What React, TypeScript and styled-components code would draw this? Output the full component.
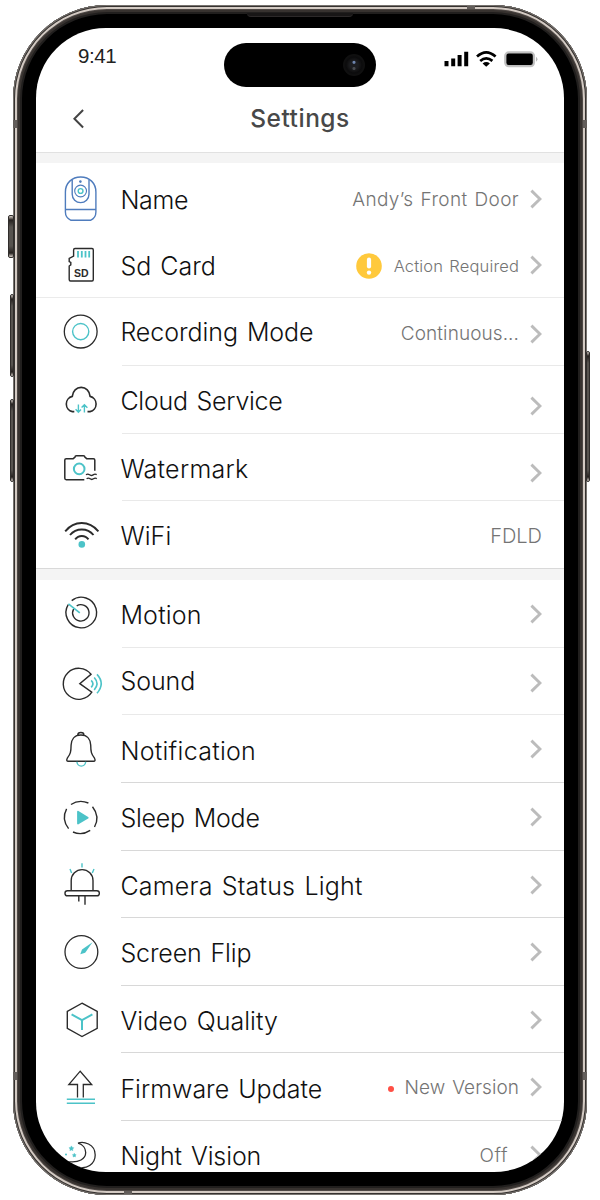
import React from 'react';
import styled, { createGlobalStyle } from 'styled-components';

const INK = '#2b2b2b';
const TEAL = '#4cc3c8';
const BLUE = '#4f7cbd';

const GlobalStyle = createGlobalStyle`
  * { box-sizing: border-box; }
  body { margin: 0; background: #fff; font-family: Inter, "Liberation Sans", sans-serif; }
`;

const Stage = styled.main`
  width: 600px;
  height: 1200px;
  padding: 5px 13px;
  overflow: hidden;
  background: #fff;
`;

const Phone = styled.div`
  position: relative;
  width: 574px;
  height: 1190px;
  padding: 23px;
  border-radius: 94px;
  background: #000;
  box-shadow:
    inset 0 0 0 1px #77736f,
    inset 0 0 0 2px #35312f,
    inset 0 0 0 4px #d3cac3,
    inset 0 0 0 5px #4d4744,
    inset 0 0 0 7px #37322f,
    inset 0 0 0 9px #211f1e;
`;

const SideButton = styled.span<{ $side: 'left' | 'right'; $top: number; $height: number; $depth: number }>`
  position: absolute;
  ${p => p.$side}: ${p => -p.$depth}px;
  top: ${p => p.$top}px;
  width: ${p => p.$depth + 1}px;
  height: ${p => p.$height}px;
  border: 1px solid #302d2b;
  border-radius: 2px;
  background: linear-gradient(to bottom, #d8d0c9 0, #26211f 4px, #57534f 11px, #57534f calc(100% - 11px), #26211f calc(100% - 4px), #d8d0c9 100%);
`;

const Band = styled.span<{ $x: number; $y: number; $flat?: boolean }>`
  position: absolute;
  left: ${p => p.$x}px;
  top: ${p => p.$y}px;
  width: ${p => (p.$flat ? 8 : 4)}px;
  height: ${p => (p.$flat ? 3 : 8)}px;
  background: #625d5a;
`;

const Earpiece = styled.span`
  position: absolute;
  left: 234px;
  top: 8px;
  width: 106px;
  height: 4px;
  border-radius: 0 0 4px 4px;
  background: #181616;
  border-bottom: 1px solid #2c2929;
`;

const Screen = styled.div`
  position: relative;
  width: 528px;
  height: 1144px;
  border-radius: 70px;
  overflow: hidden;
  background: #fff;
`;

const Island = styled.div`
  position: absolute;
  left: 188px;
  top: 15px;
  width: 152px;
  height: 44px;
  padding: 11px;
  border-radius: 22px;
  background: #000;
  display: flex;
  justify-content: flex-end;
`;

const Lens = styled.i`
  width: 22px;
  height: 22px;
  border-radius: 50%;
  background:
    radial-gradient(circle at 50% 66%, #4a4c50 0 1px, transparent 2px),
    radial-gradient(circle at 50% 38%, #6d84ad 0 1px, transparent 2px),
    radial-gradient(circle, #1c1d20 0 4px, #141415 6px, #0b0b0c 8px, #101010 10px);
`;

const StatusBar = styled.header`
  height: 60px;
  padding: 17px 26px 0 42px;
  display: flex;
  justify-content: space-between;
`;

const Clock = styled.time`
  margin-top: -1px;
  font: 400 20.5px/24px "Liberation Sans", sans-serif;
  letter-spacing: -0.4px;
  color: #222;
`;

const StatusIcons = styled.svg`
  width: 98px;
  height: 24px;
`;

const TitleBar = styled.div`
  height: 65px;
  padding: 14px 37px 0;
  display: grid;
  grid-template-columns: 24px 1fr 24px;
  border-bottom: 1px solid #e1e1e1;
`;

const BackButton = styled.button`
  width: 14px;
  height: 22px;
  margin-top: 6px;
  padding: 0;
  border: 0;
  background: none;
  svg { display: block; }
`;

const Title = styled.h1`
  margin: 0;
  font-size: 24.5px;
  font-weight: 500;
  line-height: 32px;
  letter-spacing: 0.5px;
  text-align: center;
  color: #484848;
`;

const Gap = styled.div`
  height: 10px;
  background: #f4f4f4;
`;

const WideGap = styled(Gap)`
  height: 11px;
`;

const Row = styled.section<{ $height: number; $line?: string }>`
  display: flex;
  height: ${p => p.$height}px;
  border-bottom: ${p => (p.$line ? `1px solid ${p.$line}` : 0)};
`;

const IconCell = styled.div`
  flex: 0 0 84px;
  padding-left: 24px;
  svg { display: block; overflow: visible; }
`;

const Body = styled.div<{ $line?: string; $indent: number }>`
  flex: 1;
  display: flex;
  align-items: flex-start;
  justify-content: space-between;
  padding: 0 22px 0 0;
  border-bottom: ${p => (p.$line ? `1px solid ${p.$line}` : 0)};
  margin-left: ${p => p.$indent}px;
`;

const Label = styled.span<{ $baseline: number; $tracking: number; $pull: number }>`
  margin-top: ${p => p.$baseline - 24}px;
  margin-left: ${p => -p.$pull}px;
  font-size: 25px;
  font-weight: 340;
  line-height: 30px;
  letter-spacing: ${p => p.$tracking}px;
  word-spacing: 2px;
  white-space: nowrap;
  color: #111;
`;

const Trailing = styled.div`
  display: flex;
  align-items: flex-start;
`;

const Value = styled.span<{ $baseline: number; $tracking: number; $size: number; $gap: number }>`
  margin-top: ${p => p.$baseline - 19}px;
  margin-right: ${p => p.$gap}px;
  font-size: ${p => p.$size}px;
  font-weight: 350;
  line-height: 24px;
  letter-spacing: ${p => p.$tracking}px;
  word-spacing: 1.5px;
  white-space: nowrap;
  color: #747474;
`;

const Chevron = styled.svg<{ $center: number }>`
  width: 12px;
  height: 20px;
  margin-top: ${p => p.$center - 10}px;
`;

const Warning = styled.svg`
  width: 26px;
  height: 26px;
  margin: 22px 12px 0 0;
`;

const Dot = styled.i`
  width: 6px;
  height: 6px;
  margin: 33px 11px 0 0;
  border-radius: 50%;
  background: #ff4f45;
`;

const icons: Record<string, React.ReactNode> = {
  camera: (
    <g stroke={BLUE} strokeWidth="1.4">
      <path d="M5.4 46.5V29C5.4 20 12 14 20.7 14S35.9 20 35.9 29V46.5ZM5.4 46.5V49C5.4 53 8 56 11 57.3H30.5C33.5 56 35.9 53 35.9 49V46.5" />
      <path d="M12.2 16.5V31.2a8.4 8.4 0 0 0 16.8 0V16.5" />
      <circle cx="20.6" cy="28" r="5.9" strokeWidth="1.1" />
      <circle cx="20.6" cy="28" r="2.4" stroke={TEAL} />
      <circle cx="20.4" cy="18.6" r="1.3" fill={BLUE} stroke="none" />
    </g>
  ),
  sd: (
    <>
      <path d="M15 17.5H32Q33.3 17.5 33.3 19V48.5Q33.3 50 32 50H10.5Q9.2 50 9.2 48.5V35L10.8 33.8V31.5L9.2 30.5V27.5L13.6 25V19Q13.6 17.5 15 17.5Z" />
      <path d="M18 20v6.4M21.8 20v6.4M25.5 20v6.4M29.2 20v6.4" stroke={TEAL} strokeWidth="1.8" />
      <text x="21.4" y="45.6" fontFamily="Liberation Sans, sans-serif" fontWeight="700" fontSize="10.5" textAnchor="middle" fill={INK} stroke="none">SD</text>
    </>
  ),
  recording: (
    <>
      <circle cx="20.7" cy="33.6" r="16.4" strokeWidth="1.3" />
      <circle cx="20.7" cy="33.6" r="8.1" stroke={TEAL} />
    </>
  ),
  cloud: (
    <>
      <path d="M14.3 45.6H12.4A7.8 7.8 0 0 1 12.3 30.4C12.8 25 16.4 21.4 21.2 21.4S29.6 25 30.1 30.4A7.8 7.8 0 0 1 30 45.6H27.5" strokeWidth="1.6" />
      <path d="M18.4 38.5V46.2M15.6 43.2L18.4 46.3L21 43.6M24.4 46.5V38.8M21.6 41.6L24.4 38.7L27.4 41.8" stroke={TEAL} />
    </>
  ),
  watermark: (
    <>
      <path d="M24.3 45.7H6.2Q4.8 45.7 4.8 44.3V26Q4.8 24.7 6.2 24.7H13.2L15 23.2Q15 21.8 16.4 21.8H23.4Q24.8 21.8 24.9 23.2L26.7 24.7H33.4Q34.8 24.7 34.8 26V36.8" strokeWidth="1.5" />
      <path d="M26 40.8q1.8-1.3 3.5 0t3.6 0t3.6-.2M26.6 44.8q1.8-1.3 3.5 0t3.4 0t3.3-.2" />
      <circle cx="19.2" cy="34.9" r="5.3" stroke={TEAL} strokeWidth="2" />
    </>
  ),
  wifi: (
    <>
      <path d="M5.2 30.3Q12 22 21.7 22T38.4 30.3" strokeWidth="1.9" />
      <path d="M10 34Q14.6 28.5 21.8 28.5T33.5 34" strokeWidth="1.9" />
      <path d="M15.2 38.4Q17.6 35 21.8 35T28.5 38.4" strokeWidth="1.9" />
      <circle cx="21.8" cy="43.4" r="3.3" fill={TEAL} stroke="none" />
    </>
  ),
  motion: (
    <>
      <path d="M11.7 20.6A15.3 15.3 0 1 1 8.2 24.6M16.7 25.8A8.2 8.2 0 1 1 13.6 29" />
      <path d="M8.4 23.8L19.8 32.8" stroke={TEAL} strokeWidth="1.7" />
    </>
  ),
  sound: (
    <>
      <path d="M31 26.3A15.5 15.5 0 1 0 31.8 44.2L19.8 35.6Z" />
      <path d="M31.2 32.3Q34.6 35.5 31.2 39.4M34.2 29.5Q39.8 35.5 34.2 42M37 26.4Q45.4 35.5 37 45.3" stroke={TEAL} strokeWidth="1.6" />
    </>
  ),
  bell: (
    <>
      <path d="M17.7 20.3C17.7 16.6 24 16.6 24 20.3M20.9 20C14 20 11.3 25 11.1 30C11 37 10.5 39 7.3 43.2Q5.8 46.2 8.4 46.3H33.5Q36 46.2 34.5 43.2C31.3 39 30.8 37 30.7 30C30.5 25 27.8 20 20.9 20Z" />
      <path d="M17 46.8a4.2 4.2 0 0 0 8.6 0" stroke={TEAL} />
    </>
  ),
  sleep: (
    <>
      <path d="M11 21.5Q19 16.1 28.4 20M32.5 23.7Q40.2 33.5 34.5 44M30.2 47.4Q21.8 53 13 49M8.6 45.7Q1.2 36 6.6 25.8" strokeWidth="1.4" />
      <path d="M18 28.7L27.7 34.7L18 40.5Z" stroke={TEAL} strokeWidth="1.8" fill={TEAL} strokeLinejoin="round" />
    </>
  ),
  light: (
    <>
      <path d="M11.2 39.5V29.5A10.9 10.9 0 0 1 33 29.5V39.5" />
      <rect x="5" y="39.7" width="34.3" height="5.1" rx="2.4" />
      <path d="M18.8 45V50.5M25 45V53.8" />
      <path d="M22 12.3V16.5M10 18L11.6 22M34 18L32.3 22" stroke={TEAL} />
    </>
  ),
  flip: (
    <>
      <circle cx="21.4" cy="34" r="16.4" strokeWidth="1.3" />
      <path d="M32.5 24.2L22 31.6L20.3 36.2L25.2 34.8Z" fill={TEAL} stroke="none" />
    </>
  ),
  cube: (
    <>
      <path d="M22 17.2L37.2 25.5V42.3L22 50.5L7.3 42.3V25.5Z" />
      <path d="M11.6 28.4L22 34.2L32.4 28.4M22 34.2V44" stroke={TEAL} strokeWidth="2" />
    </>
  ),
  update: (
    <>
      <path d="M17.5 44.6V31.5H8.8L20.2 18.2L31.7 31.5H23.3V44.6" strokeWidth="1.3" />
      <path d="M6.8 46.3H35M6.8 50.2H35" stroke={TEAL} strokeWidth="1.5" />
    </>
  ),
  night: (
    <>
      <path d="M18 22.2C23 20.2 35.2 22.5 35.2 34C35.2 43.5 26 48.5 18.5 46M18 22.2C23 23.5 25.7 27.6 25.7 31.6C25.7 38 19 42 8.3 40.6" strokeWidth="1.3" />
      <path d="M11.4 24.9l.8 1.5 1.6.4-1.2 1.2.2 1.6-1.4-.7-1.5.7.3-1.6-1.2-1.2 1.6-.4zM14.3 32.3l.6 1.2 1.3.3-1 .9.2 1.3-1.1-.6-1.2.6.3-1.3-1-.9 1.3-.3z" fill={TEAL} stroke={TEAL} strokeWidth=".5" />
      <circle cx="6" cy="33.4" r="1" fill={TEAL} stroke="none" />
    </>
  ),
};

type Item = {
  label: string;
  icon: string;
  height: number;
  baseline: number;
  tracking: number;
  chevron?: number;
  value?: string;
  valueBase?: number;
  valueTracking?: number;
  valueSize?: number;
  valueGap?: number;
  mark?: 'warning' | 'dot';
  edge?: 'none' | 'full' | 'inset';
};

const general: Item[] = [
  { label: 'Name', icon: 'camera', height: 68, baseline: 46, tracking: -0.3, chevron: 35.5, value: 'Andy’s Front Door', valueBase: 43.6, valueTracking: 0.34, edge: 'none' },
  { label: 'Sd Card', icon: 'sd', height: 67, baseline: 44, tracking: 0, chevron: 34, value: 'Action Required', valueBase: 42, valueTracking: 0.15, valueSize: 16.5, mark: 'warning', edge: 'full' },
  { label: 'Recording Mode', icon: 'recording', height: 68, baseline: 43, tracking: -0.06, chevron: 35.5, value: 'Continuous...', valueBase: 42.6, valueTracking: 0.08 },
  { label: 'Cloud Service', icon: 'cloud', height: 68, baseline: 44, tracking: -0.26, chevron: 39.5 },
  { label: 'Watermark', icon: 'watermark', height: 67, baseline: 44, tracking: 0.28, chevron: 39.3 },
  { label: 'WiFi', icon: 'wifi', height: 68, baseline: 44, tracking: 0.1, value: 'FDLD', valueBase: 42, valueTracking: 0, valueSize: 20, valueGap: 0, edge: 'full' },
];

const features: Item[] = [
  { label: 'Motion', icon: 'motion', height: 68, baseline: 44, tracking: 0.2, chevron: 34 },
  { label: 'Sound', icon: 'sound', height: 67, baseline: 42, tracking: -0.05, chevron: 35 },
  { label: 'Notification', icon: 'bell', height: 68, baseline: 44.5, tracking: 0.28, chevron: 34 },
  { label: 'Sleep Mode', icon: 'sleep', height: 68, baseline: 44, tracking: -0.23, chevron: 34 },
  { label: 'Camera Status Light', icon: 'light', height: 67, baseline: 44, tracking: 0.2, chevron: 33.5 },
  { label: 'Screen Flip', icon: 'flip', height: 68, baseline: 44, tracking: -0.14, chevron: 34 },
  { label: 'Video Quality', icon: 'cube', height: 67, baseline: 44, tracking: 0.03, chevron: 34 },
  { label: 'Firmware Update', icon: 'update', height: 68, baseline: 45, tracking: 0, chevron: 34, value: 'New Version', valueBase: 42, valueTracking: 0.06, mark: 'dot' },
  { label: 'Night Vision', icon: 'night', height: 67, baseline: 44, tracking: -0.1, chevron: 34, value: 'Off', valueBase: 42, valueTracking: 0.5, valueGap: 22 },
];

function SettingRow({ item, line, indent, rowLine }: { item: Item; line: string; indent: number; rowLine?: string }) {
  const edge = item.edge ?? 'inset';
  return (
    <Row $height={item.height} $line={edge === 'full' ? rowLine : undefined}>
      <IconCell>
        <svg width="48" height="62" viewBox="0 0 48 62" fill="none" stroke={INK} strokeWidth="1.4">
          {icons[item.icon]}
        </svg>
      </IconCell>
      <Body $line={edge === 'inset' ? line : undefined} $indent={indent}>
        <Label $baseline={item.baseline} $tracking={item.tracking} $pull={indent - 0.4}>{item.label}</Label>
        <Trailing>
          {item.mark === 'warning' && (
            <Warning viewBox="0 0 26 26">
              <circle cx="13" cy="13" r="12.8" fill="#ffc93c" />
              <path d="M13 6.7V13.5" stroke="#fff" strokeWidth="4.2" strokeLinecap="round" />
              <circle cx="13" cy="19.6" r="2.2" fill="#fff" />
            </Warning>
          )}
          {item.mark === 'dot' && <Dot />}
          {item.value && (
            <Value $baseline={item.valueBase ?? 41} $tracking={item.valueTracking ?? 0} $size={item.valueSize ?? 19} $gap={item.valueGap ?? 11}>
              {item.value}
            </Value>
          )}
          {item.chevron && (
            <Chevron $center={item.chevron} viewBox="0 0 12 20">
              <path d="M1.4 1.6L10 10L1.4 18.4" fill="none" stroke="#bcbcbc" strokeWidth="2.9" />
            </Chevron>
          )}
        </Trailing>
      </Body>
    </Row>
  );
}

export default function App() {
  return (
    <Stage>
      <GlobalStyle />
      <Phone>
        <SideButton $side="left" $top={210} $height={43} $depth={5} />
        <SideButton $side="left" $top={289} $height={83} $depth={3} />
        <SideButton $side="left" $top={394} $height={83} $depth={3} />
        <SideButton $side="right" $top={346} $height={131} $depth={3} />
        <Band $x={0} $y={115} />
        <Band $x={570} $y={115} />
        <Band $x={0} $y={1067} />
        <Band $x={570} $y={1067} />
        <Band $x={454} $y={1} $flat />
        <Band $x={111} $y={1186} $flat />
        <Earpiece />
        <Screen>
          <StatusBar>
            <Clock>9:41</Clock>
            <StatusIcons viewBox="440 45 98 24">
              <path d="M444.5 61h4v5.3h-4zM451.2 58.5h4v7.8h-4zM457.6 55h4v11.3h-4zM464.2 51.7h4v14.6h-4z" />
              <g fill="none" stroke="#000" strokeWidth="2.7">
                <path d="M477 56.6Q486.2 48.2 495.6 56.6" />
                <path d="M480.2 60.9Q486.2 55.7 492.4 60.9" />
              </g>
              <path d="M482.6 63.4Q486.2 60.6 489.9 63.4L486.2 66.8Z" />
              <rect x="504.8" y="52" width="29.6" height="14.6" rx="4" fill="#bdbdbd" stroke="#c4c4c4" strokeWidth="1.4" />
              <rect x="506.4" y="53.6" width="26.4" height="11.4" rx="2.2" />
              <path d="M536.2 56.8Q538.6 59.2 536.2 61.8Z" fill="#aaa" />
            </StatusIcons>
          </StatusBar>
          <TitleBar>
            <BackButton aria-label="Back">
              <svg width="14" height="22" viewBox="0 0 14 22">
                <path d="M10.1 2L1.4 10.8L10.1 19.5" fill="none" stroke="#444" strokeWidth="2" />
              </svg>
            </BackButton>
            <Title>Settings</Title>
          </TitleBar>
          <Gap />
          {general.map(item => <SettingRow key={item.label} item={item} line="#e9e9e9" rowLine={item.icon === 'wifi' ? '#d9d9d9' : '#ebebeb'} indent={2} />)}
          <WideGap />
          {features.map((item, i) => <SettingRow key={item.label} item={item} line={i < 2 ? '#e9e9e9' : '#d8d8d8'} indent={i < 2 ? 2 : 1} />)}
          <Island><Lens /></Island>
        </Screen>
      </Phone>
    </Stage>
  );
}
